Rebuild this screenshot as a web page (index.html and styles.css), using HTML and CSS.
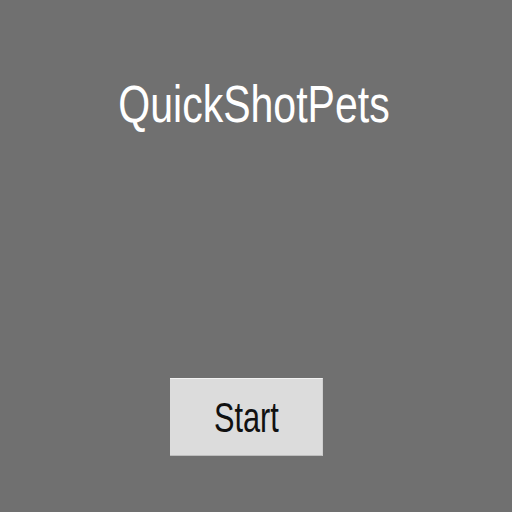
FILE: index.html
```html
<!DOCTYPE html>
<html>
<head>
<meta charset="utf-8">
<link rel="stylesheet" href="styles.css">
</head>
<body>
<div class="screen">
  <h1 class="title"><span class="squeeze">QuickShotPets</span></h1>
  <div class="spacer"></div>
  <div class="actions">
    <button class="start"><span class="squeeze-btn">Start</span></button>
  </div>
</div>
</body>
</html>
```

FILE: styles.css
```css
html, body {
  margin: 0;
  padding: 0;
  width: 512px;
  height: 512px;
  background: #707070;
  overflow: hidden;
}
.screen {
  width: 512px;
  height: 512px;
  display: flex;
  flex-direction: column;
  align-items: center;
  font-family: "Liberation Sans", Arial, sans-serif;
}
.title {
  margin: 0;
  margin-top: 72px;
  height: 64px;
  display: flex;
  justify-content: center;
  align-items: center;
  font-weight: normal;
  font-size: 52px;
  color: #ffffff;
  line-height: 64px;
  width: 512px;
  padding-right: 5px;
  box-sizing: border-box;
}
.squeeze {
  display: inline-block;
  transform: scaleX(0.789);
  white-space: nowrap;
}
.spacer {
  height: 242px;
}
.actions {
  width: 512px;
  display: flex;
  justify-content: flex-start;
  padding-left: 170px;
  box-sizing: border-box;
}
.start {
  width: 153px;
  height: 78px;
  margin: 0;
  padding: 2px 0 0 0;
  background: #dcdcdc;
  border: none;
  border-top: 1px solid #f2f2f2;
  border-bottom: 1px solid #bdbdbd;
  border-right: 1px solid #cfcfcf;
  font-family: "Liberation Sans", Arial, sans-serif;
  font-size: 42px;
  color: #111111;
  display: flex;
  justify-content: center;
  align-items: center;
}
.squeeze-btn {
  display: inline-block;
  transform: scaleX(0.73);
}
```
